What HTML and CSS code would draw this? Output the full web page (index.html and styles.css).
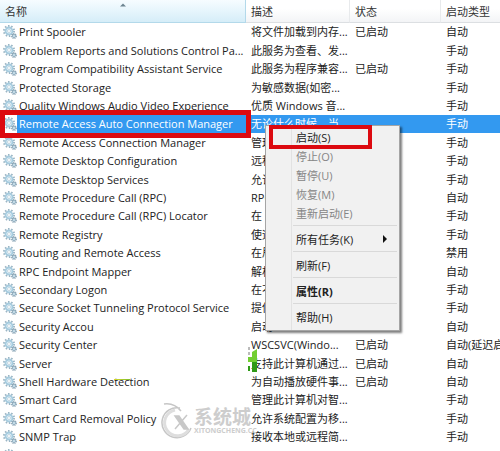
FILE: index.html
```html
<!DOCTYPE html>
<html lang="zh-CN">
<head>
    <meta charset="UTF-8">
    <meta name="viewport" content="width=device-width, initial-scale=1.0">
    <title>服务</title>
    <link rel="stylesheet" href="styles.css">
</head>
<body>
    <!-- Gear icon used by every service -->
    <svg class="sprite" aria-hidden="true">
        <symbol id="gear" viewBox="0 0 14 14">
            <circle cx="6" cy="6" r="5" fill="none" stroke="#9bb5c4" stroke-width="2" stroke-dasharray="1.5 1.64"/>
            <circle cx="6" cy="6" r="3.5" fill="#dff1fa" stroke="#a6cbde" stroke-width="1.8"/>
            <circle cx="6" cy="6" r="1.5" fill="#fff" stroke="#abc3d0" stroke-width=".6"/>
            <circle cx="11" cy="11" r="2.3" fill="none" stroke="#849eae" stroke-width="1.2" stroke-dasharray="1.1 .7"/>
            <circle cx="11" cy="11" r="1.6" fill="#c9e0ec" stroke="#8facbd" stroke-width=".9"/>
        </symbol>
    </svg>

    <main class="services">
        <table class="service-table">
            <colgroup>
                <col class="col-name">
                <col class="col-desc">
                <col class="col-status">
                <col class="col-type">
            </colgroup>
            <thead>
                <tr>
                    <th class="sorted" scope="col">名称
                        <svg class="sort-arrow" viewBox="0 0 6 4"><path d="M0 3.5 3 .5 6 3.5Z" fill="#6c8390"/></svg>
                    </th>
                    <th scope="col">描述</th>
                    <th scope="col">状态</th>
                    <th scope="col">启动类型</th>
                </tr>
            </thead>
            <tbody id="service-list"></tbody>
        </table>

        <!-- Watermark -->
        <div class="watermark">
            <svg class="watermark-logo" viewBox="0 0 34 38">
                <path d="M4 2C11 1 17 4 21 9M20 6A15 15 0 1 0 31 26" fill="none" stroke="#c6c6c6" stroke-width="1.5"/>
                <path d="M15 8A13 13 0 1 0 29 27" fill="none" stroke="#dedede" stroke-width="3"/>
                <path d="M15 14h4l9 13h-4ZM27 13 15 27" fill="#c8c8c8" stroke="#c8c8c8" stroke-width="1.5"/>
            </svg>
            <div class="watermark-text">
                <span class="watermark-name">系统城</span>
                <span class="watermark-site">XITONGCHENG.CC</span>
            </div>
        </div>

        <svg class="green-mark" viewBox="0 0 12 26">
            <path d="M1 0v3M1 5v3" stroke="#777" stroke-width="1"/>
            <path d="M4 5 9 2V15H0V10H4Z" fill="#72cf32"/>
            <path d="M0 19H2V24H0ZM4 15H9V25H4Z" fill="#2f9a17"/>
        </svg>
        <div class="green-line"></div>

        <div class="mark mark-row"></div>

        <!-- Context menu -->
        <div class="context-menu" role="menu">
            <button role="menuitem">启动(S)</button>
            <button role="menuitem" disabled>停止(O)</button>
            <button role="menuitem" disabled>暂停(U)</button>
            <button role="menuitem" disabled>恢复(M)</button>
            <button role="menuitem" disabled>重新启动(E)</button>
            <hr>
            <button class="has-submenu" role="menuitem">所有任务(K)
                <svg viewBox="0 0 4 8"><path d="M0 0 4 4 0 8Z" fill="#111"/></svg>
            </button>
            <hr>
            <button role="menuitem">刷新(F)</button>
            <hr>
            <button class="default" role="menuitem">属性(R)</button>
            <hr>
            <button role="menuitem">帮助(H)</button>
            <div class="mark mark-item"></div>
        </div>
    </main>

    <script>
        const services = [
            ["Print Spooler", "将文件加载到内存...", "已启动", "自动"],
            ["Problem Reports and Solutions Control Pa...", "此服务为查看、发...", "", "手动"],
            ["Program Compatibility Assistant Service", "此服务为程序兼容...", "已启动", "手动"],
            ["Protected Storage", "为敏感数据(如密...", "", "手动"],
            ["Quality Windows Audio Video Experience", "优质 Windows 音...", "", "手动"],
            ["Remote Access Auto Connection Manager", "无论什么时候，当", "", "手动"],
            ["Remote Access Connection Manager", "管理", "", "手动"],
            ["Remote Desktop Configuration", "远程", "", "手动"],
            ["Remote Desktop Services", "允许", "", "手动"],
            ["Remote Procedure Call (RPC)", "RPC", "", "自动"],
            ["Remote Procedure Call (RPC) Locator", "在 ", "", "手动"],
            ["Remote Registry", "使远", "", "手动"],
            ["Routing and Remote Access", "在局", "", "禁用"],
            ["RPC Endpoint Mapper", "解析", "", "自动"],
            ["Secondary Logon", "在不", "", "手动"],
            ["Secure Socket Tunneling Protocol Service", "提供", "", "手动"],
            ["Security Accou", "启动", "", "自动"],
            ["Security Center", "WSCSVC(Windo...", "已启动", "自动(延迟启动)"],
            ["Server", "支持此计算机通过...", "已启动", "自动"],
            ["Shell Hardware Detection", "为自动播放硬件事...", "已启动", "自动"],
            ["Smart Card", "管理此计算机对智...", "", "手动"],
            ["Smart Card Removal Policy", "允许系统配置为移...", "", "手动"],
            ["SNMP Trap", "接收本地或远程简...", "", "手动"],
            ["", "", "", ""]
        ];
        const selected = 5;

        const list = document.getElementById("service-list");
        services.forEach((service, i) => {
            const row = list.insertRow();
            if (i === selected) row.classList.add("selected");

            service.forEach((text, col) => {
                const cell = row.insertCell();
                if (col === 0) {
                    cell.innerHTML = '<div class="service-name"><svg class="gear"><use href="#gear"/></svg><span></span></div>';
                    cell.querySelector("span").textContent = text;
                } else {
                    cell.textContent = text;
                }
            });
        });
    </script>
</body>
</html>
```
FILE: styles.css
```css
body {
    margin: 0;
    height: 100vh;
    overflow: hidden;
    background: #fff;
    color: #222;
    font-family: "Open Sans", "Noto Sans CJK SC", sans-serif;
    font-size: 11px;
}

.sprite {
    position: absolute;
    width: 0;
    height: 0;
}

.services {
    position: relative;
}

/* Service list */
.service-table {
    width: 100%;
    table-layout: fixed;
    border-collapse: separate;
    border-spacing: 0;
    line-height: 18px;
}

.col-name {
    width: 246px;
}

.col-desc {
    width: 104px;
}

.col-status {
    width: 91px;
}

.service-table th {
    box-sizing: border-box;
    height: 23px;
    padding: 2px 5px 0;
    border-right: 1px solid #e8eaec;
    border-bottom: 1px solid #dcdfe2;
    background: linear-gradient(#fff 40%, #f3f4f6);
    color: #333;
    font-weight: normal;
    text-align: left;
    white-space: nowrap;
}

.service-table th.sorted {
    position: relative;
    border-color: #b3d9ea;
    background: linear-gradient(#f6fcff, #e6f5fc 50%, #d5edf8);
}

.service-table th:last-child {
    border-right: 0;
}

.sort-arrow {
    position: absolute;
    top: 3px;
    left: 49%;
    width: 6px;
    height: 4px;
}

.service-table td {
    height: 18px;
    padding: 0 0 0 5px;
    overflow: hidden;
    white-space: nowrap;
}

.service-table tr:nth-child(5n + 2) td,
.service-table tr:nth-child(5n + 4) td {
    height: 19px;
}

.service-table td:first-child {
    padding-left: 3px;
}

.service-name {
    display: flex;
    align-items: center;
    gap: 2px;
    height: 18px;
}

.gear {
    flex: none;
    width: 14px;
    height: 14px;
}

.selected td {
    background: #3399f0;
    color: #fff;
}

.selected td:first-child {
    background: linear-gradient(to right, #fff 17px, #3399f0 17px);
}

/* Red outlines */
.mark {
    position: absolute;
    box-sizing: border-box;
    border: 5px solid #dc0a10;
    pointer-events: none;
}

.mark-row {
    top: 110px;
    left: 0;
    width: 251px;
    height: 28px;
}

.mark-item {
    top: -1px;
    left: 3px;
    width: 103px;
    height: 24px;
    border-width: 4px;
}

/* Context menu */
.context-menu {
    position: absolute;
    top: 125px;
    left: 265px;
    box-sizing: border-box;
    width: 135px;
    padding: 1px 2px 4px;
    border: 1px solid #a5a5a5;
    background: linear-gradient(to right, #f1f1f1 25px, #e2e2e2 25px, #e2e2e2 26px, #f1f1f1 26px);
    box-shadow: 2px 2px 2px rgba(0, 0, 0, 0.5);
}

.context-menu button {
    display: flex;
    align-items: center;
    justify-content: space-between;
    width: 100%;
    height: 19px;
    padding: 0 10px 0 28px;
    border: 0;
    background: none;
    color: #222;
    font: inherit;
    white-space: nowrap;
}

.context-menu button:disabled {
    color: #858585;
}

.context-menu button.default {
    font-weight: bold;
}

.context-menu hr {
    height: 1px;
    margin: 3px 0 3px 25px;
    border: 0;
    background: #d9d9d9;
}

.has-submenu svg {
    width: 4px;
    height: 8px;
}

/* Overlays on the list */
.watermark {
    position: absolute;
    top: 402px;
    left: 160px;
    display: flex;
    align-items: center;
    color: #cdcdcd;
}

.watermark-logo {
    width: 34px;
    height: 38px;
}

.watermark-text {
    display: flex;
    flex-direction: column;
}

.watermark-name {
    font-size: 19px;
    font-weight: bold;
    line-height: 20px;
}

.watermark-site {
    font-size: 7px;
    font-weight: bold;
    line-height: 8px;
}

.green-mark {
    position: absolute;
    top: 347px;
    left: 248px;
    width: 12px;
    height: 26px;
}

.green-line {
    position: absolute;
    top: 379px;
    left: 114px;
    width: 16px;
    height: 1px;
    background: linear-gradient(to right, #d8d62c, #7fbf2e);
}
```
